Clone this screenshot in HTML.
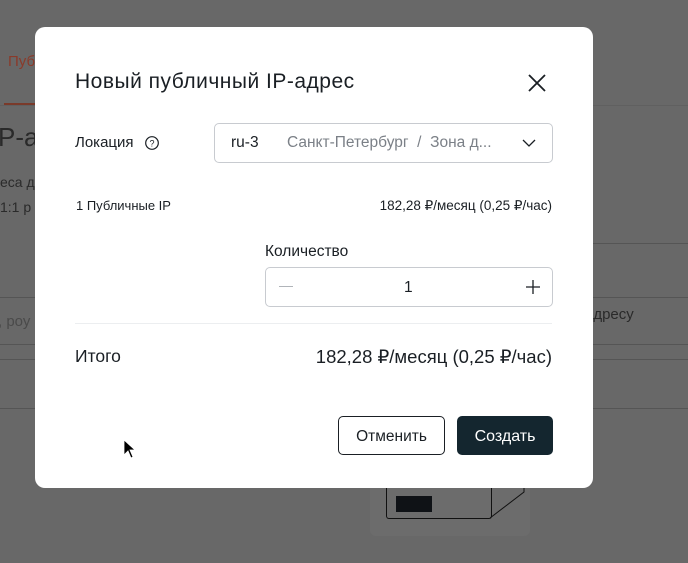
<html><head><style>
body{margin:0;width:688px;height:563px;background:#686868;position:relative;overflow:hidden;font-family:"Liberation Sans",sans-serif;color:#1a1f24}
.a{position:absolute}
.bg{color:#2a2a2a}
</style></head><body>
<div class="a" style="left:8px;top:53px;font-size:15px;color:#8a3a2a">Пуб</div>
<div class="a" style="left:4px;top:103px;width:40px;height:2px;background:#7a3a2a"></div>
<div class="a" style="left:0;top:105px;width:688px;height:1px;background:#606060"></div>
<div class="a bg" style="left:-2px;top:122px;font-size:26px">P-a</div>
<div class="a bg" style="left:0;top:174px;font-size:14px">еса д</div>
<div class="a bg" style="left:0;top:199px;font-size:14px">1:1 р</div>
<div class="a" style="left:0;top:297px;width:688px;height:1px;background:#555"></div>
<div class="a" style="left:0;top:344px;width:688px;height:1px;background:#555"></div>
<div class="a" style="left:0;top:359px;width:688px;height:1px;background:#555"></div>
<div class="a" style="left:0;top:408px;width:688px;height:1px;background:#555"></div>
<div class="a" style="left:593px;top:243px;width:95px;height:1px;background:#555"></div>
<div class="a" style="left:-2px;top:313px;font-size:15px;color:#4a4a4a">, роу</div>
<div class="a bg" style="left:585px;top:306px;font-size:15px">адресу</div>
<div class="a" style="left:370px;top:470px;width:160px;height:66px;background:#6c6c6c;border-radius:6px"></div>
<div class="a" style="left:386px;top:470px;width:104px;height:48px;border:1px solid #111;border-top:none;border-radius:0 0 3px 3px"></div>
<div class="a" style="left:396px;top:496px;width:36px;height:16px;background:#0f1216"></div>
<svg class="a" style="left:488px;top:470px" width="40" height="50"><path d="M2 48 L36 22 L36 10" stroke="#111" fill="none"/></svg>
<div class="a" style="left:35px;top:27px;width:558px;height:461px;background:#fff;border-radius:10px"></div>
<div class="a" style="left:75px;top:70px;font-size:21px;letter-spacing:0.5px">Новый публичный IP-адрес</div>
<svg class="a" style="left:528px;top:74px" width="18" height="18"><path d="M1 1L17 17M17 1L1 17" stroke="#1a1f24" stroke-width="1.8"/></svg>
<div class="a" style="left:75px;top:134px;font-size:15px">Локация</div>
<svg class="a" style="left:144px;top:135px" width="16" height="16"><circle cx="8" cy="8" r="6.3" stroke="#1a1f24" fill="none" stroke-width="1.2"/><text x="8" y="11.5" font-size="9" text-anchor="middle" font-family="Liberation Sans" fill="#1a1f24">?</text></svg>
<div class="a" style="left:214px;top:123px;width:337px;height:38px;border:1px solid #c8cbd0;border-radius:5px"></div>
<div class="a" style="left:231px;top:134px;font-size:15.5px">ru-3</div>
<div class="a" style="left:287px;top:134px;font-size:15.5px;color:#7b8087">Санкт-Петербург &nbsp;/ &nbsp;Зона д...</div>
<svg class="a" style="left:522px;top:138px" width="14" height="10"><path d="M1 2L7 8L13 2" stroke="#1a1f24" fill="none" stroke-width="1.3"/></svg>
<div class="a" style="left:76px;top:198px;font-size:13px">1 Публичные IP</div>
<div class="a" style="left:300px;top:198px;width:252px;text-align:right;font-size:13.5px">182,28 ₽/месяц (0,25 ₽/час)</div>
<div class="a" style="left:265px;top:243px;font-size:15.5px">Количество</div>
<div class="a" style="left:265px;top:267px;width:286px;height:38px;border:1px solid #c8cbd0;border-radius:5px"></div>
<div class="a" style="left:279px;top:286px;width:14px;height:1px;background:#b0b4b9"></div>
<div class="a" style="left:404px;top:279px;font-size:15.5px">1</div>
<svg class="a" style="left:526px;top:280px" width="14" height="14"><path d="M7 0V14M0 7H14" stroke="#1a1f24" stroke-width="1.3"/></svg>
<div class="a" style="left:75px;top:323px;width:477px;height:1px;background:#eceef0"></div>
<div class="a" style="left:75px;top:346px;font-size:17.5px">Итого</div>
<div class="a" style="left:250px;top:346px;width:302px;text-align:right;font-size:18.5px">182,28 ₽/месяц (0,25 ₽/час)</div>
<div class="a" style="left:338px;top:416px;width:105px;height:37px;border:1px solid #1a1f24;border-radius:5px;font-size:15.5px;line-height:39px;text-align:center">Отменить</div>
<div class="a" style="left:457px;top:416px;width:96px;height:39px;background:#14262f;border-radius:5px;color:#fff;font-size:16px;line-height:41px;text-align:center">Создать</div>
<svg class="a" style="left:123px;top:439px" width="14" height="20"><path d="M1 1V16L5 12L8 19L10 18L7 11H12Z" fill="#000" stroke="#fff" stroke-width="0.8"/></svg>
</body></html>
